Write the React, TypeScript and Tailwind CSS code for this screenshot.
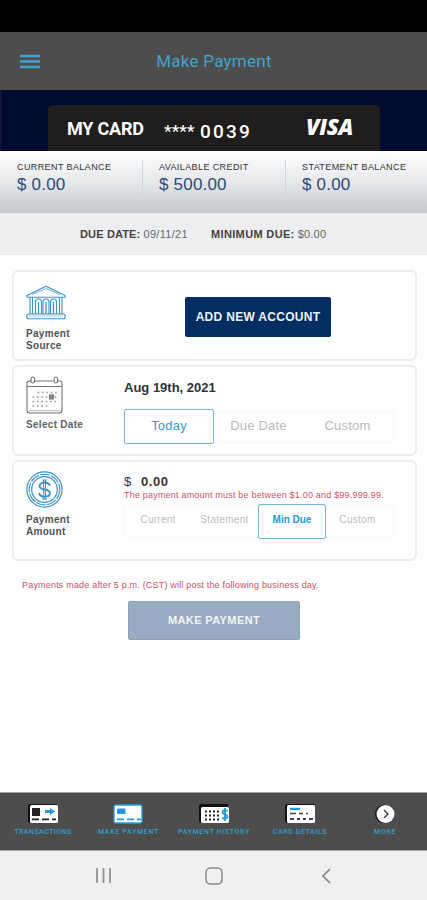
import type { ReactNode } from "react";

const sans = "font-['Liberation_Sans',Arial,sans-serif]";
const roboto = "font-[Roboto,sans-serif]";

function Balance({ label, amount, className }: { label: string; amount: string; className: string }) {
  return (
    <div className={`h-9 ${className}`}>
      <div className="mt-[3px] whitespace-nowrap text-[9px] leading-[9px] tracking-[0.4px] text-[#303236]">{label}</div>
      <div className="mt-[3px] whitespace-nowrap text-[17px] leading-[20px] tracking-[0.2px] text-[#2d4b7b]">{amount}</div>
    </div>
  );
}

function Panel({ className, children }: { className: string; children: ReactNode }) {
  return (
    <section className={`flex w-[405px] rounded-[6px] border-2 border-[#ededee] bg-white pl-3 ${className}`}>{children}</section>
  );
}

function BankIcon() {
  return (
    <svg className="block h-[36px] w-[40px]" viewBox="0 0 40 36" fill="none" stroke="#3a91cb" strokeWidth="1.1">
      <path d="M1 10.5 20 1.2 39 10.5v1.8H1Z" strokeLinejoin="round" />
      <path d="M6 9.5 20 3.5l14 6" strokeWidth=".7" />
      <path d="M4 12.5V29M6.5 12.5V29M33.5 12.5V29M36 12.5V29" />
      <path d="M9.5 29V17a3 3 0 0 1 6 0v12M17 29V17a3 3 0 0 1 6 0v12M24.5 29V17a3 3 0 0 1 6 0v12" />
      <path d="M12.5 17v12M20 17v12M27.5 17v12" strokeWidth="1.3" />
      <rect x=".8" y="29" width="38.4" height="4.8" rx="2" />
      <path d="M3 31h34" strokeWidth=".5" />
    </svg>
  );
}

function CalendarIcon() {
  return (
    <svg className="block h-[38px] w-[37px]" viewBox="0 0 37 38" fill="none" stroke="#707275" strokeWidth="1.1">
      <path d="M5 5H3a2 2 0 0 0-2 2v27a3 3 0 0 0 3 3h29a3 3 0 0 0 3-3V7a2 2 0 0 0-2-2h-2M9 5h18M1 10.5h35" />
      <path d="M3 34.7h31" stroke="#b9bbbd" />
      <rect x="5" y="1" width="3.6" height="6" rx="1.8" />
      <rect x="28" y="1" width="3.6" height="6" rx="1.8" />
      <path d="M11.5 16.5h20M6.5 21h25M6.5 25.5h25M6.5 30h16" stroke="#999b9e" strokeWidth="1.7" strokeDasharray="1.7 2.7" />
      <rect x="23.5" y="19" width="4" height="4" fill="#8d8f92" stroke="#77797c" />
    </svg>
  );
}

function DollarIcon() {
  return (
    <svg className="block size-[37px]" viewBox="0 0 37 37" fill="none" stroke="#3a91cb">
      <circle cx="18.5" cy="18.5" r="17.6" strokeWidth="1.2" />
      <circle cx="18.5" cy="18.5" r="15.3" strokeWidth="1.1" strokeDasharray="10 1.2" />
      <circle cx="18.5" cy="18.5" r="12.8" strokeWidth="1.2" />
      <path d="M23.8 14.7c-.5-2.2-2.5-3.2-5.1-3.2-3 0-5.2 1.3-5.2 3.5 0 5 10.5 2 10.5 7 0 2.4-2.3 3.7-5.4 3.7-3 0-5-1.2-5.5-3.7" strokeWidth="1.8" />
      <path d="M17.7 9v19M19.5 9v19M16 9h5M16 28h5" strokeWidth="1" />
    </svg>
  );
}

function CardIcon({ kind }: { kind: "transactions" | "payment" | "history" | "details" }) {
  return (
    <svg className="block h-5 w-[31px]" viewBox="0 0 31 20">
      {kind !== "payment" && <path d="M0 17V2a2 2 0 0 1 2-2h27v4H5v15H2a2 2 0 0 1-2-2" fill="#111" />}
      <rect x={kind === "payment" ? 1 : 2} y={kind === "history" ? 3 : 1} width="28" height={kind === "history" ? 16 : 18} rx="1.5" fill="#fff" stroke={kind === "payment" ? "#289bd5" : "none"} strokeWidth="1.3" />
      {kind === "transactions" && (
        <>
          <rect x="4" y="4" width="8" height="8" fill="#222" />
          <path d="M17 6h5V4l5 3.6-5 3.5V9h-5Z" fill="#2699d7" />
          <path d="M4 15.3h7M14 15.3h7M24 15.3h4" stroke="#222" strokeWidth="1.7" />
        </>
      )}
      {kind === "payment" && (
        <>
          <rect x="4" y="4.5" width="8.5" height="5.5" rx="1" fill="#2699d7" />
          <path d="M4 15.3h7M14 15.3h7M24 15.3h4" stroke="#2699d7" strokeWidth="1.7" />
        </>
      )}
      {kind === "history" && (
        <>
          <path d="M6 7.5h16M6 11.5h16M6 15.5h16" stroke="#222" strokeWidth="2" strokeDasharray="2 2" />
          <path d="M28.5 7.3c-.8-1.4-5-1.5-5 1s5 1.7 5 4.2-4.2 2.5-5.2.9M26 4v13" stroke="#2699d7" strokeWidth="1.8" fill="none" />
        </>
      )}
      {kind === "details" && (
        <>
          <path d="M5 5h10" stroke="#2699d7" strokeWidth="2.4" />
          <path d="M5 9.5h6M14 9.5h4M21 9.5h2" stroke="#444" strokeWidth="1.5" />
          <path d="M5 15h4M12 15h3M18 15h3M24 15h4" stroke="#444" strokeWidth="2" />
        </>
      )}
    </svg>
  );
}

function MoreIcon() {
  return (
    <svg className="block size-5" viewBox="0 0 20 20" fill="none">
      <circle cx="9.3" cy="9.8" r="9.3" fill="#111" />
      <circle cx="10.5" cy="10" r="9" fill="#fff" />
      <path d="m9 6 4 4-4 4" stroke="#333" strokeWidth="1.3" />
    </svg>
  );
}

function Tab({ width, label, labelClass, children }: { width: string; label: string; labelClass: string; children: ReactNode }) {
  return (
    <div className={`flex flex-col items-center ${width}`}>
      {children}
      <span className={`mt-[3px] whitespace-nowrap text-[7px] font-medium leading-[10px] text-[#2e9dce] ${labelClass}`}>{label}</span>
    </div>
  );
}

export default function App() {
  return (
    <main className={`flex h-[900px] w-[427px] flex-col overflow-hidden bg-[#fefefe] ${sans}`}>
      <div className="h-8 bg-black" />
      <header className={`grid h-[58px] grid-cols-[46px_1fr_45px] items-center bg-[#4d4d4d] ${roboto}`}>
        <svg className="ml-5 h-[15px] w-5" viewBox="0 0 20 15" stroke="#42a2ca" strokeWidth="2.4">
          <path d="M0 2h20M0 7.5h20M0 13h20" />
        </svg>
        <h1 className="text-center text-[17px] leading-5 tracking-[0.25px] text-[#42a2ca]">Make Payment</h1>
      </header>

      <div className="flex h-[61px] border-l-2 border-[#0b1839] bg-[#000b2f] pl-[46px] pt-[15px]">
        <div className="flex h-[46px] w-[332px] rounded-t-[5px] bg-[#201d1d] pl-[19px] text-white">
          <span className={`mt-[14px] w-[97px] whitespace-nowrap text-[18px] font-bold leading-5 tracking-[-0.2px] ${roboto}`}>MY CARD</span>
          <span className={`mt-[16px] w-[36px] whitespace-nowrap text-[17px] font-medium leading-5 tracking-[0.15px] ${roboto}`}>****</span>
          <span className={`mt-[17px] w-[106px] text-[19px] font-medium leading-5 tracking-[2.2px] ${roboto}`}>0039</span>
          <span className="mt-[9px] font-['Open_Sans',sans-serif] text-[22px] font-extrabold italic leading-6 tracking-[-0.3px]">VISA</span>
        </div>
      </div>

      <div className="flex h-[62px] bg-linear-to-b from-white via-[#e6e8ea] to-[#c5c8cc] pl-[17px] pt-[9px]">
        <Balance label="CURRENT BALANCE" amount="$ 0.00" className="w-[126px] border-r border-[#d3d6d8]" />
        <Balance label="AVAILABLE CREDIT" amount="$ 500.00" className="w-[143px] border-r border-[#d3d6d8] pl-4" />
        <Balance label="STATEMENT BALANCE" amount="$ 0.00" className="pl-4" />
      </div>

      <div className="flex h-[42px] items-center bg-[#eceef0] pl-20 text-[11px] text-[#66686b]">
        <p className="w-[131px] whitespace-nowrap"><b className="tracking-[0.15px] text-[#424447]">DUE DATE:</b> <span className="tracking-[0.3px]">09/11/21</span></p>
        <p className="whitespace-nowrap"><b className="tracking-[0.35px] text-[#424447]">MINIMUM DUE:</b> <span className="tracking-[0.2px]">$0.00</span></p>
      </div>

      <div className="flex flex-col gap-1 pl-3 pt-[15px]">
        <Panel className="h-[91px]">
          <div className="w-[159px] pt-[13px]">
            <BankIcon />
            <p className="mt-[7px] text-[10px] font-bold leading-[12px] tracking-[0.3px] text-[#505256]">Payment<br />Source</p>
          </div>
          <button className="mt-[25px] h-10 w-[146px] whitespace-nowrap rounded-[2px] bg-[#002e61] text-[12px] font-bold tracking-[0.3px] text-[#edf1f5]">ADD NEW ACCOUNT</button>
        </Panel>

        <Panel className="h-[91px]">
          <div className="w-[98px] pt-[9px]">
            <CalendarIcon />
            <p className="mt-[5px] text-[10px] font-bold leading-[12px] tracking-[0.3px] text-[#606266]">Select Date</p>
          </div>
          <div className="pt-[13px]">
            <p className="text-[13px] font-bold leading-4 text-[#303236]">Aug 19th, 2021</p>
            <div className="mt-[13px] flex text-[13px] tracking-[0.2px] text-[#b8babc]">
              <button className="h-[35px] w-[90px] rounded-[2px] border border-[#79bdcf] pb-[2px] text-[#3499d2]">Today</button>
              <div className="mt-[2px] flex h-[32px] w-[180px] border border-l-0 border-[#f7f7f7] pb-[3px]">
                <button className="w-[89px]">Due Date</button>
                <button className="w-[89px]">Custom</button>
              </div>
            </div>
          </div>
        </Panel>

        <Panel className="h-[101px]">
          <div className="w-[98px] pt-[9px]">
            <DollarIcon />
            <p className="mt-[6px] text-[10px] font-bold leading-[12px] tracking-[0.3px] text-[#505256]">Payment<br />Amount</p>
          </div>
          <div className="pt-[12px]">
            <p className="flex h-4 text-[13px] font-bold leading-4 text-[#34363a]"><span className="w-[17px] font-normal">$</span><span className="tracking-[0.6px]">0.00</span></p>
            <p className="whitespace-nowrap text-[9px] leading-[11px] tracking-[0.2px] text-[#ca5268]">The payment amount must be between $1.00 and $99,999.99.</p>
            <div className="mt-[3px] flex items-center text-[10px] text-[#bbbdbf]">
              <div className="flex h-[33px] w-[134px] border border-r-0 border-[#f8f8f8] pb-[4px]">
                <button className="w-[66px] tracking-[0.25px]">Current</button>
                <button className="w-[67px] tracking-[0.3px]">Statement</button>
              </div>
              <button className="h-[35px] w-[68px] rounded-[2px] border border-[#6fb8cf] pb-[4px] text-[10px] font-bold text-[#249bd7]">Min Due</button>
              <button className="h-[33px] w-[68px] border border-l-0 border-[#f8f8f8] pb-[4px] pr-1 tracking-[0.3px]">Custom</button>
            </div>
          </div>
        </Panel>
      </div>

      <p className="ml-[22px] mt-[18px] whitespace-nowrap text-[9px] leading-[13px] tracking-[0.19px] text-[#ca5268]">Payments made after 5 p.m. (CST) will post the following business day.</p>
      <button className="ml-[128px] mt-[9px] h-[39px] w-[172px] shrink-0 rounded-[2px] border border-[#8da1b7] bg-[#99abc0] text-[11px] font-bold tracking-[0.4px] text-[#f1f4f6]">MAKE PAYMENT</button>

      <footer className="mt-auto">
        <nav className={`flex h-[59px] border-y border-[#a5a5a5] bg-[#4d4d4d] pt-[11px] ${roboto}`}>
          <Tab width="w-[86px]" label="TRANSACTIONS" labelClass="tracking-[0.47px]"><CardIcon kind="transactions" /></Tab>
          <Tab width="w-[85px]" label="MAKE PAYMENT" labelClass="tracking-[0.7px]"><CardIcon kind="payment" /></Tab>
          <Tab width="w-[86px]" label="PAYMENT HISTORY" labelClass="tracking-[0.65px]"><CardIcon kind="history" /></Tab>
          <Tab width="w-[86px]" label="CARD DETAILS" labelClass="tracking-[0.6px]"><CardIcon kind="details" /></Tab>
          <Tab width="w-[84px]" label="MORE" labelClass="tracking-[0.8px]"><MoreIcon /></Tab>
        </nav>
        <div className="flex h-[49px] items-center bg-[#f0f0f0] pl-[95px]">
          <svg className="h-[18px] w-[17px]" viewBox="0 0 17 18" stroke="#929292" strokeWidth="1.8"><path d="M2 1v15M8.5 1v15M15 1v15" /></svg>
          <svg className="ml-[93px] h-[18px] w-[18px]" viewBox="0 0 18 18" fill="none" stroke="#8c8c8c" strokeWidth="1.6"><rect x="1" y="1" width="16" height="16" rx="4.5" /></svg>
          <svg className="ml-[97px] h-[18px] w-[12px]" viewBox="0 0 12 18" fill="none" stroke="#858585" strokeWidth="1.6"><path d="m10 2-7 7 7 7" /></svg>
        </div>
      </footer>
    </main>
  );
}
